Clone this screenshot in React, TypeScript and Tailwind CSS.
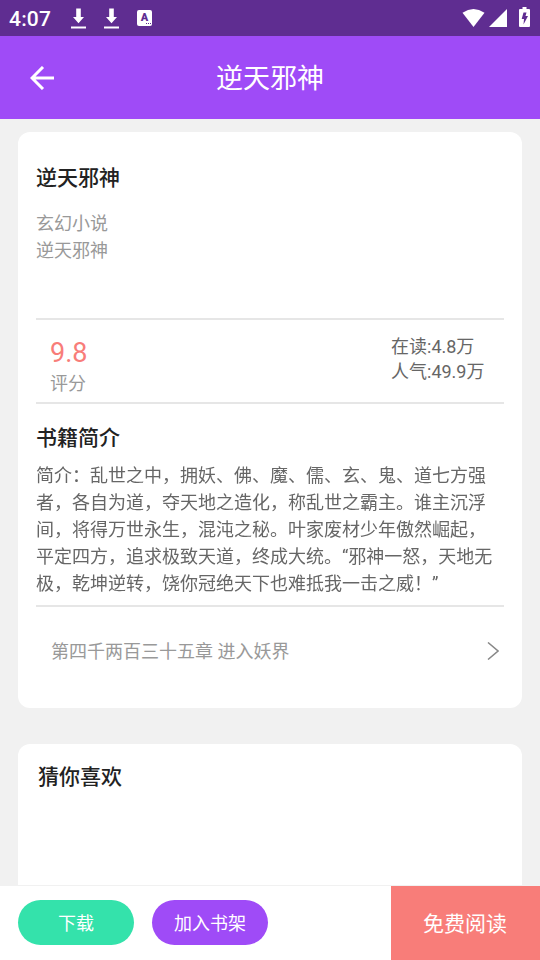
import type { ReactNode } from 'react';

const intro = [
  '简介：乱世之中，拥妖、佛、魔、儒、玄、鬼、道七方强',
  '者，各自为道，夺天地之造化，称乱世之霸主。谁主沉浮',
  '间，将得万世永生，混沌之秘。叶家废材少年傲然崛起，',
  '平定四方，追求极致天道，终成大统。“邪神一怒，天地无',
  '极，乾坤逆转，饶你冠绝天下也难抵我一击之威！”',
];

function DownloadIcon() {
  return (
    <svg width="15" height="21" viewBox="0 0 15 21" fill="#fff">
      <path d="M5.2.5h4.600v8.500H13l-5.500 6.200L2 9h3.200z" />
      <path d="M0 18.500h15v2H0z" />
    </svg>
  );
}

function StatusBar() {
  return (
    <div className="flex h-9 shrink-0 items-center bg-[#5f2d91] text-white">
      <span className="mt-[2px] ml-[9px] w-[62px] text-[21px] leading-9 font-medium tracking-[0.2px]">4:07</span>
      <DownloadIcon />
      <div className="ml-[18px]">
        <DownloadIcon />
      </div>
      <div className="ml-[18px] flex h-4 w-[15px] flex-col items-center rounded-[2px] bg-white text-[#5f2d91]">
        <span className="h-[13px] text-[11px] leading-[16px] font-black">A</span>
        <span className="mr-[1px] flex gap-px self-end">
          <i className="size-[1px] bg-[#5f2d91]" />
          <i className="size-[1px] bg-[#5f2d91]" />
          <i className="size-[1px] bg-[#5f2d91]" />
        </span>
      </div>
      <svg className="ml-auto" width="23" height="18" viewBox="0 0 23 18" fill="#fff">
        <path d="M.5 3.800Q11.500-3.600 22.500 3.800L11.500 18z" />
      </svg>
      <svg className="ml-1" width="18" height="18" viewBox="0 0 18 18" fill="#fff">
        <path d="M18 0v18H0z" />
      </svg>
      <svg className="mr-[10px] mb-[2px] ml-3" width="11" height="20" viewBox="0 0 11 20">
        <path d="M3.500 0h4v2H10q1 0 1 1v16q0 1-1 1H1q-1 0-1-1V3q0-1 1-1h2.500z" fill="#fff" />
        <path d="M4.500 5.500h3L6.500 9H9l-4.500 8.500.5-5.500H2.700z" fill="#5f2d91" />
      </svg>
    </div>
  );
}

function Header({ title }: { title: string }) {
  return (
    <header className="relative flex h-[83px] shrink-0 items-center justify-center bg-[#9f4bf7] text-white">
      <svg
        className="absolute top-[30px] left-[30px]"
        width="24"
        height="24"
        viewBox="0 0 24 24"
        fill="none"
        stroke="#fff"
        strokeWidth="3"
      >
        <path d="M24 12H2M13 1 2 12l11 11" />
      </svg>
      <h1 className="pt-[2px] text-[27px] leading-10">{title}</h1>
    </header>
  );
}

function SectionTitle({ children }: { children: ReactNode }) {
  return <h2 className="text-[21px] leading-[30px] font-medium text-[#222]">{children}</h2>;
}

export default function App() {
  return (
    <div className="flex h-[960px] w-[540px] flex-col overflow-hidden bg-[#f1f1f1] font-[Roboto,'Noto_Sans_CJK_SC',sans-serif]">
      <StatusBar />
      <Header title="逆天邪神" />

      <main className="flex min-h-0 flex-1 flex-col gap-9 overflow-hidden px-[18px] pt-[13px]">
        {/* Book details */}
        <section className="h-[576px] shrink-0 rounded-xl bg-white px-[18px] pt-[31px]">
          <SectionTitle>逆天邪神</SectionTitle>
          <div className="mt-[17px] h-[108px] text-lg leading-[27px] text-[#999]">
            <p>玄幻小说</p>
            <p>逆天邪神</p>
          </div>

          <div className="flex h-[86px] justify-between border-y-2 border-[#e6e6e6] pr-[19.5px] pl-[14px]">
            <div>
              <p className="mt-[15px] text-[27px] leading-9 text-[#f87d79]">9.8</p>
              <p className="text-lg leading-[26px] text-[#999]">评分</p>
            </div>
            <div className="pt-[14px] text-lg leading-[25px] text-[#666]">
              <p>在读:4.8万</p>
              <p>人气:49.9万</p>
            </div>
          </div>

          <div className="h-[203px] border-b-2 border-[#e6e6e6] pt-[19px]">
            <SectionTitle>书籍简介</SectionTitle>
            <div className="mt-[9px] text-lg leading-[27px] whitespace-nowrap text-[#666] will-change-transform">
              {intro.map((line) => (
                <p key={line}>{line}</p>
              ))}
            </div>
          </div>

          <div className="flex h-[88px] items-center justify-between pr-[5.5px] pl-[15px] text-lg text-[#999]">
            <span className="pt-[2px]">第四千两百三十五章 进入妖界</span>
            <svg width="12" height="18" viewBox="0 0 12 18" fill="none" stroke="#888" strokeWidth="1.5">
              <path d="M1 .5 11 9 1 17.500" />
            </svg>
          </div>
        </section>

        {/* Recommendations */}
        <section className="h-[300px] shrink-0 rounded-xl bg-white px-5 pt-[18px]">
          <SectionTitle>猜你喜欢</SectionTitle>
        </section>
      </main>

      <footer className="flex h-[75px] shrink-0 border-t border-[#f1f1f1] bg-white text-white">
        <div className="flex flex-1 gap-[18px] pt-[14px] pl-[18px]">
          <button className="h-[45px] w-[116px] rounded-full bg-[#34e2ab] pt-[2px] text-lg">下载</button>
          <button className="h-[45px] w-[116px] rounded-full bg-[#9f4bf7] pt-[2px] text-lg">加入书架</button>
        </div>
        <button className="w-[149px] bg-[#f87d79] pt-[4px] pr-[1px] text-[21px]">免费阅读</button>
      </footer>
    </div>
  );
}
